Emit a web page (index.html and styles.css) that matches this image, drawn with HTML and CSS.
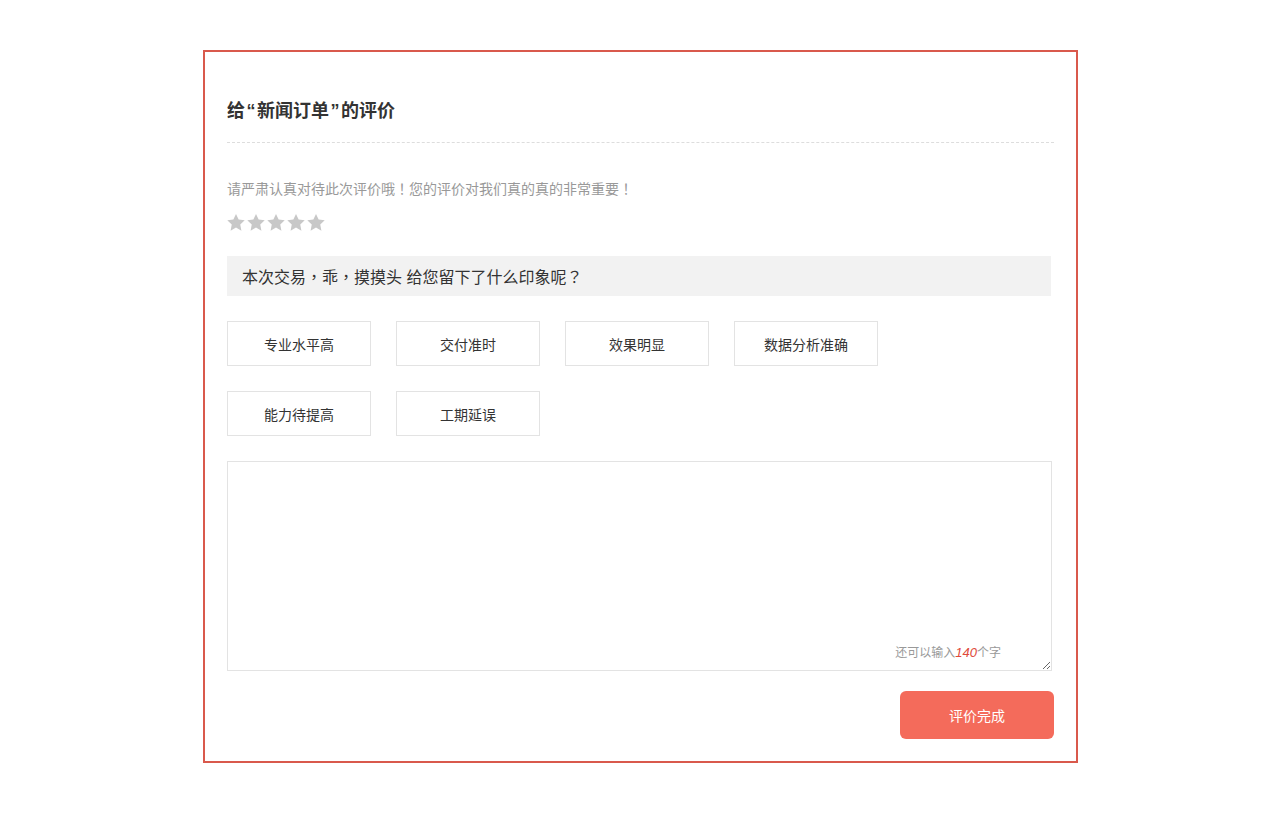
FILE: index.html
```html
<!DOCTYPE html>
<html lang="zh-CN">
<head>
<meta charset="utf-8">
<title>评价</title>
<link rel="stylesheet" href="styles.css">
</head>
<body>
<div class="panel">
  <h2 class="title">给<span class="q">“</span>新闻订单<span class="q">”</span>的评价</h2>
  <p class="hint">请严肃认真对待此次评价哦<span class="punc" lang="ja">！</span>您的评价对我们真的真的非常重要<span class="punc" lang="ja">！</span></p>
  <div class="stars">
    <svg class="star" viewBox="0 0 20 19"><path d="M10 0l2.95 6.2 6.8.8-5 4.7 1.3 6.9L10 15.2l-6.05 3.4 1.3-6.9-5-4.7 6.8-.8z"/></svg>
    <svg class="star" viewBox="0 0 20 19"><path d="M10 0l2.95 6.2 6.8.8-5 4.7 1.3 6.9L10 15.2l-6.05 3.4 1.3-6.9-5-4.7 6.8-.8z"/></svg>
    <svg class="star" viewBox="0 0 20 19"><path d="M10 0l2.95 6.2 6.8.8-5 4.7 1.3 6.9L10 15.2l-6.05 3.4 1.3-6.9-5-4.7 6.8-.8z"/></svg>
    <svg class="star" viewBox="0 0 20 19"><path d="M10 0l2.95 6.2 6.8.8-5 4.7 1.3 6.9L10 15.2l-6.05 3.4 1.3-6.9-5-4.7 6.8-.8z"/></svg>
    <svg class="star" viewBox="0 0 20 19"><path d="M10 0l2.95 6.2 6.8.8-5 4.7 1.3 6.9L10 15.2l-6.05 3.4 1.3-6.9-5-4.7 6.8-.8z"/></svg>
  </div>
  <div class="question">本次交易<span class="punc-c" lang="zh-TW">，</span>乖<span class="punc-c" lang="zh-TW">，</span>摸摸头 给您留下了什么印象呢<span class="punc" lang="ja">？</span></div>
  <div class="tags">
    <span class="tag">专业水平高</span>
    <span class="tag">交付准时</span>
    <span class="tag">效果明显</span>
    <span class="tag">数据分析准确</span>
    <span class="tag">能力待提高</span>
    <span class="tag">工期延误</span>
  </div>
  <div class="comment">
    <textarea class="comment-input"></textarea>
    <span class="counter">还可以输入<em class="count">140</em>个字</span>
  </div>
  <div class="actions">
    <button class="submit">评价完成</button>
  </div>
</div>
</body>
</html>
```
FILE: styles.css
```css
html, body {
  margin: 0;
  padding: 0;
  background: #fff;
}
body {
  font-family: "Liberation Sans", "Noto Sans CJK SC", sans-serif;
  color: #333;
  padding-top: 50px;
}
.punc {
  font-family: "Noto Sans CJK JP", sans-serif;
}
.punc-c {
  font-family: "Noto Sans CJK TC", sans-serif;
}
.q {
  padding: 0 1.5px;
}
.panel {
  width: 827px;
  margin: 0 0 0 203px;
  border: 2px solid #d9594c;
  padding: 45px 22px 22px 22px;
}
.title {
  margin: 0;
  font-size: 18px;
  line-height: 28px;
  font-weight: bold;
  color: #333;
  padding-bottom: 17px;
  border-bottom: 1px dashed #ddd;
}
.hint {
  margin: 35px 0 0 0;
  font-size: 14px;
  line-height: 20px;
  color: #999;
}
.stars {
  display: flex;
  gap: 2px;
  margin-top: 13px;
  height: 20px;
  align-items: center;
}
.star {
  width: 18px;
  height: 17px;
  fill: #c8c8c8;
}
.question {
  margin-top: 24px;
  width: 809px;
  height: 40px;
  line-height: 40px;
  padding-left: 15px;
  background: #f2f2f2;
  font-size: 16px;
  color: #333;
}
.tags {
  display: flex;
  flex-wrap: wrap;
  gap: 25px;
  margin-top: 25px;
  width: 700px;
}
.tag {
  box-sizing: border-box;
  width: 144px;
  height: 45px;
  border: 1px solid #e3e3e3;
  display: flex;
  align-items: center;
  justify-content: center;
  font-size: 14px;
  color: #333;
}
.comment {
  position: relative;
  margin-top: 25px;
  width: 825px;
  height: 210px;
}
.comment-input {
  box-sizing: border-box;
  width: 825px;
  height: 210px;
  border: 1px solid #e3e3e3;
  margin: 0;
  padding: 8px;
  display: block;
  font-family: inherit;
  font-size: 14px;
  outline: none;
}
.counter {
  position: absolute;
  right: 51px;
  bottom: 10px;
  font-size: 12px;
  line-height: 16px;
  color: #999;
}
.count {
  color: #e0493a;
  font-style: italic;
  font-size: 13px;
}
.actions {
  display: flex;
  justify-content: flex-end;
  margin-top: 20px;
}
.submit {
  width: 154px;
  height: 48px;
  border: none;
  border-radius: 6px;
  background: #f46b5b;
  color: #fff;
  font-family: inherit;
  font-size: 14px;
  cursor: pointer;
}
```
